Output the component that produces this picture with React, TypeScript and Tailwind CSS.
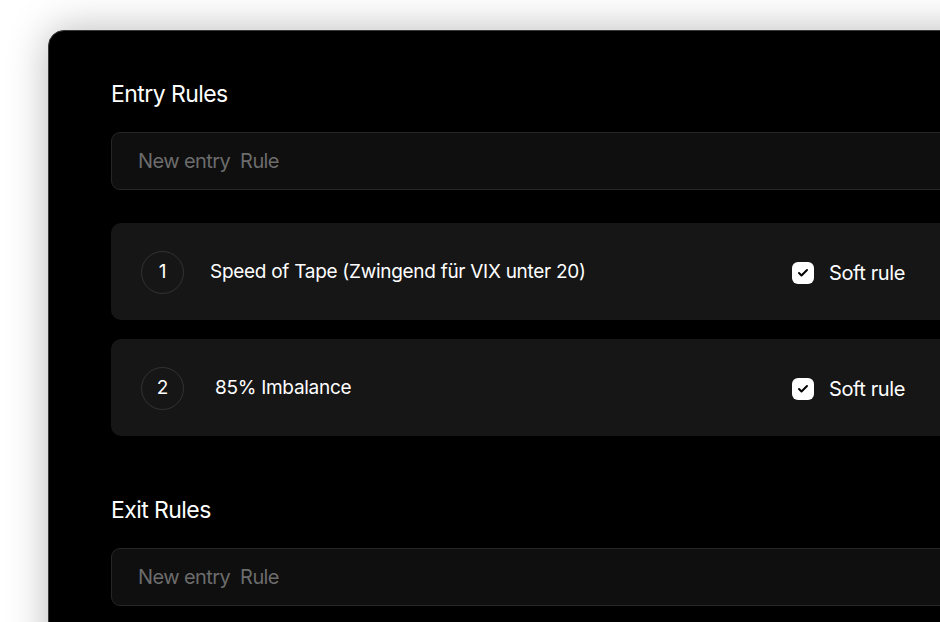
import { Check } from "lucide-react";

const ENTRY_RULES = [
  { id: 1, label: "Speed of Tape (Zwingend für VIX unter 20)", soft: true },
  { id: 2, label: "85% Imbalance", soft: true },
];

function NewRuleInput() {
  return (
    <div className="h-[58px] rounded-[9px] border border-[#262626] bg-[#0f0f0f] flex items-center pl-[26px]">
      <span className="text-[20px] text-[#6c6c6c] tracking-[-0.03em] whitespace-pre">
        New entry  Rule
      </span>
    </div>
  );
}

function RuleCard({ id, label, soft }: { id: number; label: string; soft: boolean }) {
  return (
    <div className="h-[97px] rounded-[10px] bg-[#161616] flex items-center justify-between pl-[30px] pr-[78px]">
      <div className="flex items-center pt-[2px]">
        <div className="w-[43px] h-[43px] rounded-full border border-[#333333] flex items-center justify-center text-[19px] text-white">
          {id}
        </div>
        <span
          className={`text-[19px] text-white tracking-[-0.015em] ${
            id === 2 ? "ml-[31px]" : "ml-[26px]"
          }`}
        >
          {label}
        </span>
      </div>
      <div className="flex items-center gap-[15px] pt-[2px]">
        <div
          className={`w-[22px] h-[22px] rounded-[6px] flex items-center justify-center ${
            soft ? "bg-white" : "border border-[#555]"
          }`}
        >
          {soft && <Check size={12} strokeWidth={4} className="text-black" />}
        </div>
        <span className="text-[20px] text-white tracking-[-0.02em]">Soft rule</span>
      </div>
    </div>
  );
}

export default function App() {
  return (
    <div
      className="w-[940px] h-[622px] overflow-hidden bg-white pl-[48px] pt-[30px]"
      style={{ fontFamily: "Inter, 'Noto Sans', sans-serif" }}
    >
      <div className="w-[1000px] h-[700px] rounded-tl-[16px] border border-[#3a3a3a] bg-black shadow-[0_0_40px_rgba(0,0,0,0.28)] pl-[62px] pr-[64px] pt-[49px]">
        {/* Entry section */}
        <h2 className="text-[23px] leading-[28px] text-white tracking-[-0.025em]">Entry Rules</h2>
        <div className="mt-[24px]">
          <NewRuleInput />
        </div>
        <div className="mt-[33px] flex flex-col gap-[19px]">
          {ENTRY_RULES.map((rule) => (
            <RuleCard key={rule.id} {...rule} />
          ))}
        </div>

        {/* Exit section */}
        <h2 className="mt-[60px] text-[23px] leading-[28px] text-white tracking-[-0.025em]">Exit Rules</h2>
        <div className="mt-[24px]">
          <NewRuleInput />
        </div>
      </div>
    </div>
  );
}
